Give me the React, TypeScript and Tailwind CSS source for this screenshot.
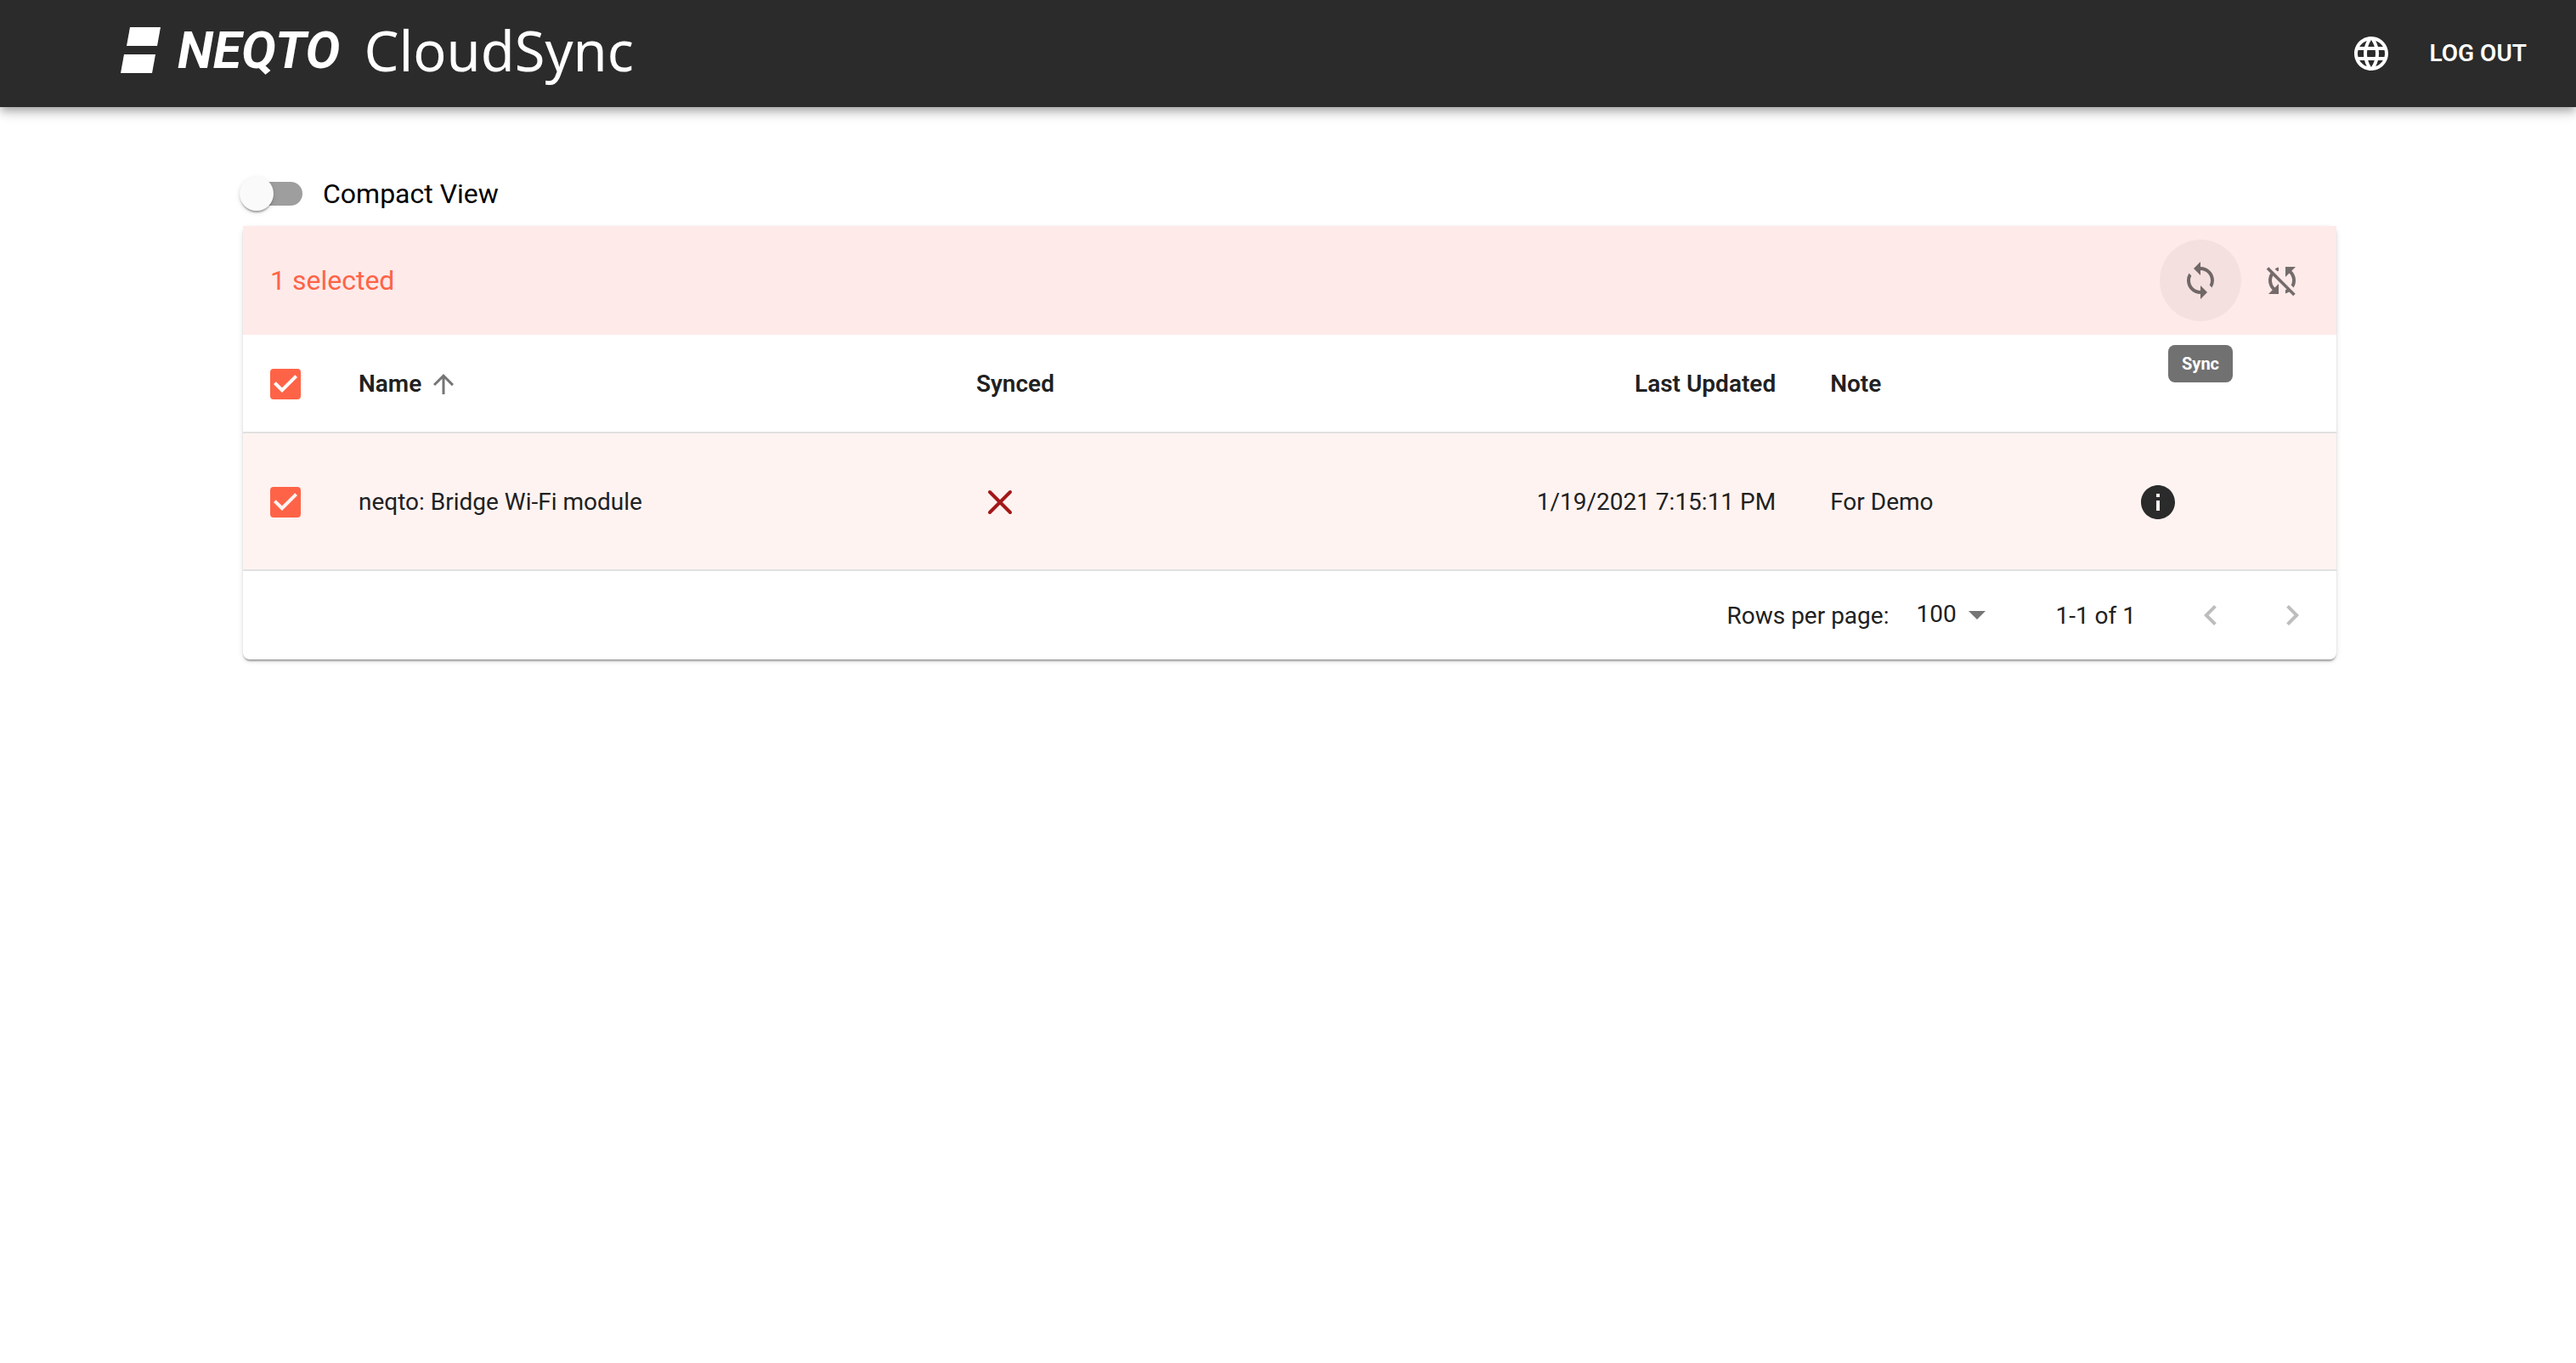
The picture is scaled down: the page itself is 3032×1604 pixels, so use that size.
import { useState } from 'react';
import {
  MdArrowDropDown,
  MdArrowUpward,
  MdInfo,
  MdKeyboardArrowLeft,
  MdKeyboardArrowRight,
  MdLanguage,
  MdSync,
  MdSyncDisabled,
} from 'react-icons/md';

const devices = [
  {
    id: 1,
    name: 'neqto: Bridge Wi-Fi module',
    synced: false,
    lastUpdated: '1/19/2021 7:15:11 PM',
    note: 'For Demo',
  },
];

function Logo() {
  return (
    <a href="#home" className="flex items-center pb-2 text-white" aria-label="NEQTO CloudSync">
      <svg width="47" height="54" viewBox="0 0 47 54" fill="currentColor" aria-hidden="true">
        <polygon points="11,0 47,0 43,22 7,22" />
        <polygon points="4,32 41,32 37,54 0,54" />
      </svg>
      <span className="ml-5 text-[61px] leading-none font-bold italic">NEQTO</span>
      <span className="ml-7 font-['Noto_Sans',sans-serif] text-[65px] leading-none">CloudSync</span>
    </a>
  );
}

function Header() {
  return (
    <header className="flex h-[126px] items-center justify-between bg-[#2b2b2b] pr-[58px] pl-[142px] text-white shadow-[0_4px_8px_-2px_rgba(0,0,0,0.2),0_8px_10px_0_rgba(0,0,0,0.14),0_2px_20px_0_rgba(0,0,0,0.12)]">
      <Logo />
      <nav className="flex items-center gap-11">
        <button type="button" aria-label="Language">
          <MdLanguage className="size-12" />
        </button>
        <button type="button" className="text-[28px] font-semibold uppercase">
          Log out
        </button>
      </nav>
    </header>
  );
}

type TickBoxProps = {
  label: string;
  checked: boolean;
  onChange: () => void;
};

function TickBox({ label, checked, onChange }: TickBoxProps) {
  return (
    <span className="grid size-9">
      <input
        type="checkbox"
        aria-label={label}
        checked={checked}
        onChange={onChange}
        className="col-start-1 row-start-1 size-9 appearance-none rounded border-4 border-[#757575] checked:border-[#ff6347] checked:bg-[#ff6347]"
      />
      {checked && (
        <svg
          viewBox="3 3 18 18"
          fill="currentColor"
          className="pointer-events-none col-start-1 row-start-1 size-9"
          aria-hidden="true"
        >
          <path d="M10 17l-5-5 1.41-1.41L10 14.17l7.59-7.59L19 8z" />
        </svg>
      )}
    </span>
  );
}

/* Thin cross with rounded ends, shown while a device is not synced */
function NotSyncedIcon() {
  return (
    <svg
      width="56"
      height="56"
      viewBox="0 0 56 56"
      stroke="#a31818"
      strokeWidth="4"
      strokeLinecap="round"
      role="img"
      aria-label="Not synced"
    >
      <path d="M16 16L40 40M40 16L16 40" />
    </svg>
  );
}

export default function App() {
  const [compact, setCompact] = useState(false);
  const [selected, setSelected] = useState<number[]>([1]);

  const toggle = (id: number) =>
    setSelected((ids) => (ids.includes(id) ? ids.filter((i) => i !== id) : [...ids, id]));
  const toggleAll = () => setSelected(selected.length ? [] : devices.map((d) => d.id));

  return (
    <div className="min-h-screen bg-white font-['Roboto',sans-serif] text-[28px] leading-10 text-[#212121]">
      <Header />

      <main className="mx-auto max-w-[2564px] pt-16 pr-12 pl-[52px]">
        <label className="ml-0.5 flex h-[76px] w-fit items-center gap-6 text-[32px] text-black">
          <input
            type="checkbox"
            role="switch"
            checked={compact}
            onChange={() => setCompact(!compact)}
            className="relative h-7 w-[68px] appearance-none rounded-full bg-[#9e9e9e] before:absolute before:-top-1.5 before:-left-1.5 before:size-10 before:rounded-full before:bg-[#fafafa] before:shadow-[0_4px_2px_-2px_rgba(0,0,0,0.2),0_2px_2px_0_rgba(0,0,0,0.14),0_2px_6px_0_rgba(0,0,0,0.12)] checked:bg-[#ff6347] checked:before:left-[34px]"
          />
          Compact View
        </label>

        <section className="rounded-lg bg-white shadow-[0_4px_2px_-2px_rgba(0,0,0,0.2),0_2px_2px_0_rgba(0,0,0,0.14),0_2px_6px_0_rgba(0,0,0,0.12)]">
          {/* Selection toolbar */}
          <div className="flex h-32 items-center justify-between bg-[#feeae9] pr-4 pl-8">
            <h2 className="text-[32px] text-[#ff6347]">{selected.length} selected</h2>
            <div className="flex text-black/54">
              <div className="relative">
                <button
                  type="button"
                  aria-label="Sync"
                  className="grid size-24 place-items-center rounded-full bg-black/4"
                >
                  <MdSync className="size-12" />
                </button>
                <span
                  role="tooltip"
                  className="absolute top-full left-1/2 mt-7 -translate-x-1/2 rounded-lg bg-[#717171] px-4 py-2 text-[20px] leading-7 font-bold text-white"
                >
                  Sync
                </span>
              </div>
              <button
                type="button"
                aria-label="Disable sync"
                className="grid size-24 place-items-center rounded-full"
              >
                <MdSyncDisabled className="size-12" />
              </button>
            </div>
          </div>

          <table className="w-full table-fixed border-separate border-spacing-0 text-left">
            <thead>
              <tr className="h-[116px] *:border-b-2 *:border-[#e0e0e0] *:pt-0.5 *:font-semibold">
                <th className="w-[104px] pl-8 text-white">
                  <TickBox
                    label="Select all devices"
                    checked={selected.length === devices.length}
                    onChange={toggleAll}
                  />
                </th>
                <th className="w-[29.5%] px-8" aria-sort="ascending">
                  <button type="button" className="flex items-center gap-2">
                    Name
                    <MdArrowUpward className="size-9 text-[#757575]" />
                  </button>
                </th>
                <th className="w-[11%] px-8">Synced</th>
                <th className="w-[29.8%] px-8 text-right">Last Updated</th>
                <th className="w-[13.7%] px-8">Note</th>
                <th className="px-8" aria-label="Details" />
              </tr>
            </thead>
            <tbody>
              {devices.map((device) => (
                <tr
                  key={device.id}
                  className="h-[162px] bg-[#fef3f1] *:border-b-2 *:border-[#e0e0e0] *:pt-0.5"
                >
                  <td className="pl-8 text-[#fef3f1]">
                    <TickBox
                      label={`Select ${device.name}`}
                      checked={selected.includes(device.id)}
                      onChange={() => toggle(device.id)}
                    />
                  </td>
                  <td className="px-8">{device.name}</td>
                  <td className="px-8">{!device.synced && <NotSyncedIcon />}</td>
                  <td className="px-8 text-right">{device.lastUpdated}</td>
                  <td className="px-8">{device.note}</td>
                  <td className="px-8">
                    <button
                      type="button"
                      aria-label="Details"
                      className="grid size-24 place-items-center text-[#2b2b2b]"
                    >
                      <MdInfo className="size-12" />
                    </button>
                  </td>
                </tr>
              ))}
            </tbody>
          </table>

          {/* Pagination */}
          <div className="flex h-[104px] items-center justify-end pr-1">
            <label htmlFor="rows-per-page" className="pt-0.5">
              Rows per page:
            </label>
            <div className="mr-[68px] ml-4 grid items-center pb-0.5">
              <select
                id="rows-per-page"
                defaultValue="100"
                className="col-start-1 row-start-1 appearance-none pr-12 pl-4"
              >
                <option>100</option>
              </select>
              <MdArrowDropDown className="pointer-events-none col-start-1 row-start-1 size-12 justify-self-end text-[#757575]" />
            </div>
            <span className="pt-0.5">1-1 of 1</span>
            <div className="ml-10 flex text-black/26">
              <button
                type="button"
                disabled
                aria-label="Previous page"
                className="grid size-24 place-items-center"
              >
                <MdKeyboardArrowLeft className="size-12" />
              </button>
              <button
                type="button"
                disabled
                aria-label="Next page"
                className="grid size-24 place-items-center"
              >
                <MdKeyboardArrowRight className="size-12" />
              </button>
            </div>
          </div>
        </section>
      </main>
    </div>
  );
}
